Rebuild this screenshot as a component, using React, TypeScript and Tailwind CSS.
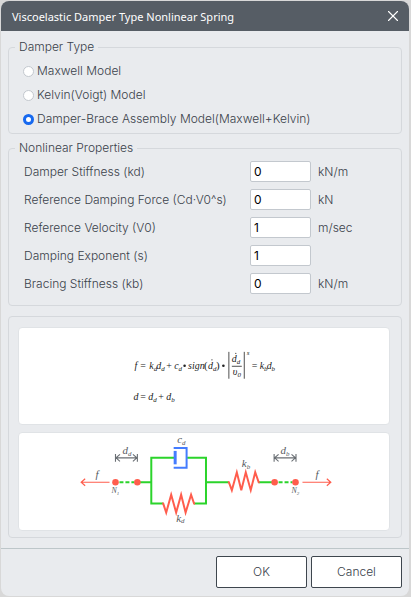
import React, { useState } from "react";
import { X } from "lucide-react";

const damperTypes = [
    { id: "maxwell", label: "Maxwell Model" },
    { id: "kelvin", label: "Kelvin(Voigt) Model" },
    { id: "assembly", label: "Damper-Brace Assembly Model(Maxwell+Kelvin)" },
];

const properties = [
    { id: "kd", label: "Damper Stiffness (kd)", value: "0", unit: "kN/m" },
    { id: "cd", label: "Reference Damping Force (Cd·V0^s)", value: "0", unit: "kN" },
    { id: "v0", label: "Reference Velocity (V0)", value: "1", unit: "m/sec" },
    { id: "s", label: "Damping Exponent (s)", value: "1", unit: "" },
    { id: "kb", label: "Bracing Stiffness (kb)", value: "0", unit: "kN/m" },
];

interface SymbolProps {
    x: number;
    y: number;
    base: string;
    sub?: string;
    size?: number;
}

// Italic variable with an optional subscript
function Sym({ x, y, base, sub, size = 10 }: SymbolProps) {
    return (
        <text x={x} y={y} fontSize={size} fontStyle="italic">
            {base}
            {sub && <tspan dy={2} fontSize={7}>{sub}</tspan>}
        </text>
    );
}

function Formula() {
    return (
        <svg
            viewBox="18 327 372 97"
            className="block w-full font-['Liberation_Serif',serif] font-normal"
            fill="#222"
            role="img"
            aria-label="Damper force equation"
        >
            <Sym x={134} y={368} base="f" />
            <text x={140} y={368} fontSize={10}>=</text>
            <Sym x={149} y={368} base="k" sub="d" />
            <Sym x={156} y={368} base="d" sub="d" />
            <text x={166} y={368} fontSize={10}>+</text>
            <Sym x={174} y={368} base="c" sub="d" />
            <circle cx={184.5} cy={365} r={1.3} />
            <Sym x={188} y={368} base="sign" />
            <text x={204} y={368} fontSize={11}>(</text>
            <Sym x={208} y={368} base="d" sub="d" />
            <circle cx={212} cy={359} r={0.6} />
            <text x={216} y={368} fontSize={11}>)</text>
            <circle cx={223.5} cy={365} r={1.3} />
            <path d="M229 351v27M244.500 351v27M232 365.500h10" stroke="#222" strokeWidth={0.8} />
            <Sym x={232} y={361} base="d" sub="d" />
            <circle cx={236} cy={352.5} r={0.6} />
            <Sym x={233} y={374} base="υ" sub="0" />
            <Sym x={247} y={354} base="s" size={7} />
            <text x={252} y={368} fontSize={10}>=</text>
            <Sym x={260} y={368} base="k" sub="b" />
            <Sym x={267} y={368} base="d" sub="b" />

            <Sym x={133} y={399} base="d" />
            <text x={140} y={399} fontSize={10}>=</text>
            <Sym x={148} y={399} base="d" sub="d" />
            <text x={158} y={399} fontSize={10}>+</text>
            <Sym x={166} y={399} base="d" sub="b" />
        </svg>
    );
}

function SpringDiagram() {
    return (
        <svg
            viewBox="18 433 372 97"
            className="block w-full font-['Liberation_Serif',serif] font-normal"
            fill="none"
            role="img"
            aria-label="Damper-brace assembly diagram"
        >
            {/* Connectors */}
            <g stroke="#2bd42b" strokeWidth={2}>
                <path d="M139 482.500h12M174 458h-23v46h12M187 458h19v46h-12M206 482.500h23M259 482.500h14" />
                <path d="M119 482.500h15M279 482.500h14" strokeDasharray="4 2" />
            </g>

            {/* Dashpot */}
            <path d="M173.500 448H186.500V468H173.500" stroke="#447cff" strokeWidth={2} />
            <path d="M175 451v13.500" stroke="#447cff" strokeWidth={3} />

            {/* Springs */}
            <g stroke="#ff5d4d" strokeWidth={2}>
                <path d="M162 504h1l3 9 5-18 5 18 5-18 4.500 18 5.500-18 3 9h1" />
                <path d="M228 482.500h1l3 8 5-18 4.500 18 4.500-18 5 18 4.500-18 3.500 10h1" />
            </g>

            {/* Force arrows */}
            <path
                d="M109 482.500H80.500M84.500 479l-4 3.500 4 3.500M303 482.500h28.500M327.500 479l4 3.500-4 3.500"
                stroke="#ff5d4d"
                strokeWidth={1.2}
            />

            {/* Nodes */}
            <g fill="#ff5d4d">
                <circle cx={115} cy={482.5} r={3.3} />
                <circle cx={137} cy={482.5} r={3.3} />
                <circle cx={275} cy={482.5} r={3.3} />
                <circle cx={296} cy={482.5} r={3.3} />
            </g>

            {/* Displacement dimensions */}
            <g stroke="#696e73" strokeWidth={1.1}>
                <path d="M115 454v8M137 454v8M115 458h22M119.500 454.500l-4 3.500 4 3.500M132.500 454.500l4 3.500-4 3.500" />
                <path d="M274.500 454v8M296.500 454v8M275 458h21M279 454.500l-4 3.500 4 3.500M292 454.500l4 3.500-4 3.500" />
            </g>

            <g fill="#555a60">
                <Sym x={95} y={478} base="f" size={11} />
                <Sym x={316} y={478} base="f" size={11} />
                <Sym x={122} y={454} base="d" sub="d" size={11} />
                <Sym x={281} y={454} base="d" sub="b" size={11} />
                <Sym x={177} y={443} base="c" sub="d" size={11} />
                <Sym x={176} y={522} base="k" sub="d" size={11} />
                <Sym x={242} y={467} base="k" sub="b" size={11} />
                <text x={111} y={493} fontSize={8} fontStyle="italic">
                    N<tspan dy={2} fontSize={5}>1</tspan>
                </text>
                <text x={292} y={493} fontSize={8} fontStyle="italic">
                    N<tspan dy={2} fontSize={5}>2</tspan>
                </text>
            </g>
        </svg>
    );
}

export default function App() {
    const [damperType, setDamperType] = useState("assembly");

    return (
        <div className="bg-[#d8d8d8] px-px pt-px pr-0.5 pb-px font-[Inter,sans-serif] text-xs font-light text-[#39414a]">
            <div className="overflow-hidden rounded-lg bg-[#e9ebee]">
                <header className="flex h-[30px] items-center justify-between bg-[#565d65] pr-[7px] pl-[11px] text-white">
                    <h1 className="pt-0.5 font-['Noto_Sans',sans-serif] text-[11px] font-normal">
                        Viscoelastic Damper Type Nonlinear Spring
                    </h1>
                    <button type="button" aria-label="Close">
                        <X className="h-[18px] w-[18px]" strokeWidth={1.5} />
                    </button>
                </header>

                <main className="px-[7px] pt-2 pb-2.5">
                    <fieldset className="rounded border border-[#d5d8dc] px-1.5 pb-1">
                        <legend className="px-1 leading-4">Damper Type</legend>
                        <div className="flex flex-col gap-1 px-2 pt-1.5">
                            {damperTypes.map((type) => (
                                <label key={type.id} className="flex h-5 items-center gap-[3px]">
                                    <input
                                        type="radio"
                                        name="damper-type"
                                        checked={damperType === type.id}
                                        onChange={() => setDamperType(type.id)}
                                        className="h-[11px] w-[11px] appearance-none rounded-full border border-[#c3c8ce] bg-white checked:border-3 checked:border-[#1769ef]"
                                    />
                                    {type.label}
                                </label>
                            ))}
                        </div>
                    </fieldset>

                    <fieldset className="mt-1.5 rounded border border-[#d5d8dc] px-1.5 pb-[11px]">
                        <legend className="px-1 leading-4">Nonlinear Properties</legend>
                        <div className="flex flex-col gap-[7px] pt-[5px] pl-[9px]">
                            {properties.map((property) => (
                                <div key={property.id} className="flex h-[21px] items-center">
                                    <label htmlFor={property.id} className="w-[226px] shrink-0">
                                        {property.label}
                                    </label>
                                    <input
                                        id={property.id}
                                        type="text"
                                        defaultValue={property.value}
                                        className="h-full w-[61px] rounded-xs border border-[#c3c8ce] bg-white px-[3px] font-normal text-black"
                                    />
                                    <span className="pl-[7px]">{property.unit}</span>
                                </div>
                            ))}
                        </div>
                    </fieldset>

                    <section className="mt-2.5 flex flex-col gap-[7px] rounded border border-[#d5d8dc] pt-2.5 pr-[11px] pb-1.5 pl-[9px]">
                        <div className="rounded border border-[#e0e3e6] bg-white">
                            <Formula />
                        </div>
                        <div className="rounded border border-[#e0e3e6] bg-white">
                            <SpringDiagram />
                        </div>
                    </section>
                </main>

                <footer className="flex justify-end gap-1 border-t border-[#bdc6c9] px-[7px] pt-[7px] pb-2">
                    <button type="button" className="h-8 w-[91px] rounded-xs border border-[#3e464e] bg-white">
                        OK
                    </button>
                    <button type="button" className="h-8 w-[91px] rounded-xs border border-[#3e464e] bg-white">
                        Cancel
                    </button>
                </footer>
            </div>
        </div>
    );
}
